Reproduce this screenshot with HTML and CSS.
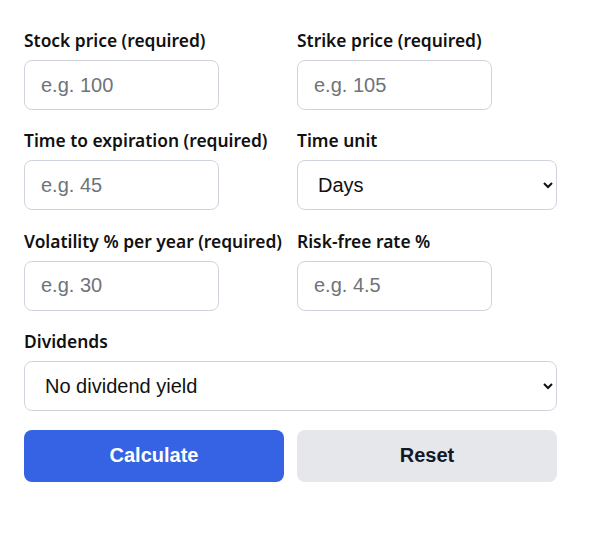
FILE: index.html
```html
<!DOCTYPE html>
<html lang="en">
<head>
  <meta charset="UTF-8" />
  <title>Option Pricing Calculator</title>
  <meta name="viewport" content="width=device-width, initial-scale=1.0"/>
  <link rel="stylesheet" href="styles.css">
</head>
<body>

  <form class="calc" onsubmit="return false;">
    <div class="field">
      <label for="stock">Stock price (required)</label>
      <input id="stock" type="text" placeholder="e.g. 100" />
    </div>
    <div class="field">
      <label for="strike">Strike price (required)</label>
      <input id="strike" type="text" placeholder="e.g. 105" />
    </div>

    <div class="field">
      <label for="time">Time to expiration (required)</label>
      <input id="time" type="text" placeholder="e.g. 45" />
    </div>
    <div class="field">
      <label for="unit">Time unit</label>
      <select id="unit">
        <option>Days</option>
        <option>Weeks</option>
        <option>Months</option>
        <option>Years</option>
      </select>
    </div>

    <div class="field">
      <label for="vol">Volatility % per year (required)</label>
      <input id="vol" type="text" placeholder="e.g. 30" />
    </div>
    <div class="field">
      <label for="rate">Risk-free rate %</label>
      <input id="rate" type="text" placeholder="e.g. 4.5" />
    </div>

    <div class="field wide">
      <label for="div">Dividends</label>
      <select id="div">
        <option>No dividend yield</option>
        <option>Continuous dividend yield</option>
      </select>
    </div>

    <button type="submit" class="btn primary">Calculate</button>
    <button type="reset" class="btn secondary">Reset</button>
  </form>

</body>
</html>
```

FILE: styles.css
```css
body {
  margin: 0;
  background: #fff;
  color: #111;
  font-family: "Noto Sans", "Open Sans", sans-serif;
}

.calc {
  display: grid;
  grid-template-columns: 260px 260px;
  column-gap: 13px;
  row-gap: 18.4px;
  padding: 28px 24px;
}

.field {
  display: flex;
  flex-direction: column;
  gap: 8px;
}

.field.wide {
  grid-column: 1 / 3;
}

label {
  font-size: 17.4px;
  font-weight: 600;
  line-height: 24px;
  white-space: nowrap;
  color: #111;
}

input[type="text"],
select {
  box-sizing: border-box;
  height: 50px;
  border: 1px solid #cfd4dc;
  border-radius: 8px;
  background: #fff;
  font-family: "Liberation Sans", Arial, sans-serif;
  font-size: 20px;
  color: #111;
}

input[type="text"] {
  width: 195px;
  padding: 0 16px;
}

input::placeholder {
  color: #6f737a;
}

select {
  width: 100%;
  padding: 0 12px 0 16px;
}

.btn {
  height: 52px;
  border: none;
  border-radius: 8px;
  font-family: "Liberation Sans", Arial, sans-serif;
  font-size: 20px;
  font-weight: bold;
  cursor: pointer;
}

.btn.primary {
  background: #3563e3;
  color: #fff;
}

.btn.secondary {
  background: #e5e7eb;
  color: #111827;
}
```
